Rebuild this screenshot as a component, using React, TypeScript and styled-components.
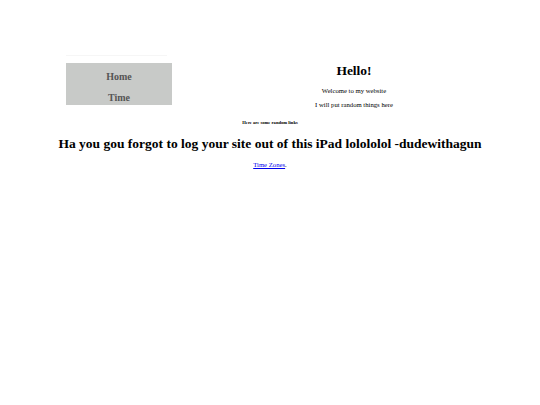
import styled, { createGlobalStyle } from 'styled-components';

const GlobalStyle = createGlobalStyle`
  html, body {
    margin: 0;
    padding: 0;
    background: #fff;
  }
  body {
    font-family: "Liberation Serif", "Times New Roman", serif;
    color: #000;
  }
`;

const navItems = ['Home', 'Time'];

export default function App() {
  return (
    <Page>
      <GlobalStyle />
      <TopRow>
        <NavColumn>
          <FaintRule />
          <Nav>
            {navItems.map((item) => (
              <NavItem key={item}>{item}</NavItem>
            ))}
          </Nav>
        </NavColumn>
        <Intro>
          <Hello>Hello!</Hello>
          <IntroText>Welcome to my website</IntroText>
          <IntroText>I will put random things here</IntroText>
        </Intro>
      </TopRow>
      <LinksNote>Here are some random links</LinksNote>
      <Shout>Ha you gou forgot to log your site out of this iPad lolololol -dudewithagun</Shout>
      <LinkLine>
        <Link href="#">Time Zones</Link>.
      </LinkLine>
    </Page>
  );
}

const Page = styled.div`
  width: 540px;
  min-height: 405px;
  padding-top: 55px;
  box-sizing: border-box;
`;

const TopRow = styled.div`
  display: flex;
  align-items: flex-start;
  margin-left: 66px;
`;

const NavColumn = styled.div`
  display: flex;
  flex-direction: column;
  width: 106px;
`;

const FaintRule = styled.div`
  width: 101px;
  height: 1px;
  background: #f6f6f6;
  margin-bottom: 7px;
`;

const Nav = styled.nav`
  height: 42px;
  background: #c8cac8;
  display: flex;
  flex-direction: column;
  align-items: center;
  gap: 9px;
  padding-top: 8px;
  box-sizing: border-box;
`;

const NavItem = styled.span`
  font-size: 10px;
  font-weight: bold;
  color: #555;
  line-height: 12px;
`;

const Intro = styled.div`
  flex: 1;
  display: flex;
  flex-direction: column;
  align-items: center;
  padding-top: 8px;
  padding-right: 4px;
`;

const Hello = styled.h1`
  margin: 0;
  font-size: 13.5px;
  line-height: 16px;
  font-weight: bold;
`;

const IntroText = styled.p`
  margin: 7px 0 0;
  font-size: 6.7px;
  line-height: 10px;

  & + & {
    margin-top: 4px;
  }
`;

const LinksNote = styled.div`
  text-align: center;
  font-size: 4.6px;
  font-weight: bold;
  line-height: 6px;
  margin-top: 10px;
`;

const Shout = styled.h2`
  text-align: center;
  font-size: 13.5px;
  line-height: 16px;
  font-weight: bold;
  margin: 10px 0 0;
`;

const LinkLine = styled.p`
  text-align: center;
  font-size: 6.7px;
  line-height: 8px;
  margin: 9px 0 0;
`;

const Link = styled.a`
  color: #00e;
  text-decoration: underline;
`;
